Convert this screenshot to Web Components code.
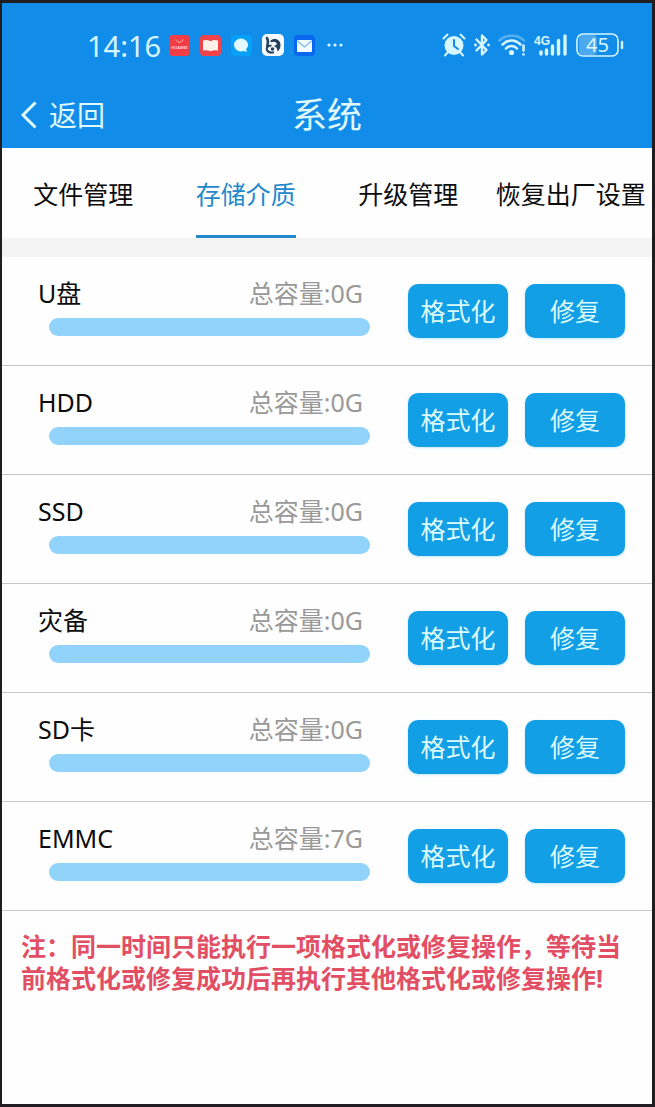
<!DOCTYPE html>
<html lang="zh-CN">
<head>
<meta charset="utf-8">
<meta name="viewport" content="width=device-width, initial-scale=1">
<title>系统</title>
<style>
  html { height: 100%; }
  body {
    margin: 0;
    min-height: 100%;
    box-sizing: border-box;
    display: flex;
    border: 3px solid #1f1d1f;
    border-left-width: 2px;
    background: #fefefe;
    color: #0c0c0c;
    font: 25px/32px "Noto Sans", "Noto Sans CJK SC", sans-serif;
  }
  storage-page { flex: 1; min-width: 0; }
</style>
</head>
<body>
<storage-page></storage-page>

<script>
const define = (name, html, setup) => {
  const template = document.createElement('template');
  template.innerHTML = html;
  customElements.define(name, class extends HTMLElement {
    constructor() {
      super();
      this.attachShadow({ mode: 'open' }).append(template.content.cloneNode(true));
    }
    connectedCallback() { if (setup) setup(this, this.shadowRoot); }
  });
};

define('status-bar', `
  <style>
    :host { display: flex; justify-content: space-between; align-items: center; height: 84px; padding: 0 28px 0 85px; color: #d8f6ff; }
    .group { display: flex; align-items: center; }
    .apps { gap: 10px; }
    .system { gap: 8px; }
    time { font-size: 29px; margin-right: -2px; padding-top: 2px; }
    svg { display: block; overflow: visible; }
    text { font-family: "Noto Sans", sans-serif; }
    .net { font-family: "Liberation Sans", sans-serif; }
  </style>
  <div class="group apps">
    <time>14:16</time>
    <svg width="21" height="21" viewBox="0 0 21 21"><rect width="21" height="21" rx="4" fill="#f23c46"/><path d="M7 4.500c.8 3.600 6.200 3.600 7 0" fill="none" stroke="#ffc3bd"/><text x="10.500" y="13.500" font-size="4" font-weight="700" fill="#ffd3cd" text-anchor="middle">HUAWEI</text></svg>
    <svg width="21" height="21" viewBox="0 0 21 21"><rect width="21" height="21" rx="4" fill="#ee4348"/><path d="M3 5.500q4-1.500 7.500.7Q14 4 18 5.500v10q-4-.8-7.500.7Q7 14.700 3 15.500z" fill="#fff1e9"/></svg>
    <svg width="21" height="21" viewBox="0 0 21 21"><rect width="21" height="21" rx="4" fill="#06a0f6"/><ellipse cx="10" cy="10" rx="7" ry="6.500" fill="#e3f9ff"/><path d="M10 15l6 2-1.500-4z" fill="#e3f9ff"/></svg>
    <svg width="22" height="22" viewBox="0 0 22 22"><rect width="22" height="22" rx="5" fill="#f5fbff"/><path d="M4 3.500C7.500 5 5.500 10 5.200 13" fill="none" stroke="#243e5b" stroke-width="2.600"/><path d="M8.500 6.500c5-3.500 10-.5 10 4.500 0 3-1 5-3 6.500 0-3-1.500-5-4-5.500 3-.5 4-2 2.500-3.500-1.300-1.200-3.500-1-5.500-.2z" fill="#243e5b"/><path d="M9.500 11.500c-4 0-5.500 2.500-4.500 4.500s4 3 7 2.300" fill="none" stroke="#243e5b" stroke-width="2"/><circle cx="10.500" cy="15" r="1.800" fill="#243e5b"/></svg>
    <svg width="21" height="21" viewBox="0 0 21 21"><rect width="21" height="21" rx="4" fill="#0867ee"/><rect x="3" y="5" width="15" height="12" rx="1" fill="#f1faff"/><path d="M3.500 6l7 6 7-6" fill="none" stroke="#7cb6ed" stroke-width="1.200"/></svg>
    <svg width="18" height="6" viewBox="0 0 18 6" fill="currentColor"><circle cx="4" cy="3" r="1.600"/><circle cx="10" cy="3" r="1.600"/><circle cx="16" cy="3" r="1.600"/></svg>
  </div>
  <div class="group system">
    <svg width="24" height="24" viewBox="0 0 24 24"><circle cx="12" cy="12.500" r="9.500" fill="currentColor"/><path d="M1.500 5.500l4-4M22.500 5.500l-4-4M5.500 19.500L3 22.500M18.500 19.500l2.500 3" stroke="currentColor" stroke-width="2" stroke-linecap="round"/><path d="M12 7v6l4 3" fill="none" stroke="#118be9" stroke-width="2" stroke-linecap="round"/></svg>
    <svg width="16" height="24" viewBox="0 0 16 24"><path d="M2.500 6.500l10 10.500L8 21.500v-19L12.500 7l-10 10.500" fill="none" stroke="currentColor" stroke-width="2.400" stroke-linejoin="round" stroke-linecap="round"/><circle cx="1.500" cy="12" r="1.400" fill="currentColor"/><circle cx="14.500" cy="12" r="1.400" fill="currentColor"/></svg>
    <svg width="28" height="24" viewBox="0 0 28 24" fill="none" stroke="currentColor" stroke-width="2.500" stroke-linecap="round"><path d="M1.500 7.500C8 1 20 1 26 7.500" opacity=".35"/><path d="M4.500 11.500C10 6 17 6 22.500 11.500M8 15.500c3.500-3.500 8-3.500 11 0"/><circle cx="13.500" cy="19.500" r="2.600" fill="currentColor" stroke="none"/><path d="M25.500 12.500v5M25.500 21.300v.1"/></svg>
    <svg width="34" height="24" viewBox="0 0 34 24"><text class="net" x="0" y="12" font-size="12" font-weight="700" fill="currentColor">4G</text><path d="M7 19v2M12.500 17v4M18.500 13v8M24.500 7.500V21M31 3v18" stroke="currentColor" stroke-width="3.400" stroke-linecap="round"/></svg>
    <svg width="48" height="26" viewBox="0 0 48 26"><rect x="3" y="3" width="18" height="20" rx="4" fill="#fff" opacity=".25"/><rect x="1" y="2" width="41" height="22" rx="6" fill="none" stroke="currentColor" stroke-width="1.600"/><path d="M46 10v6" stroke="currentColor" stroke-width="2.400" stroke-linecap="round"/><text x="21.500" y="20" font-size="20" fill="currentColor" text-anchor="middle">45</text></svg>
  </div>`);

define('title-bar', `
  <style>
    :host { display: grid; grid-template-columns: 1fr auto 1fr; align-items: center; height: 55px; padding: 0 18px 6px; color: #e0f9ff; }
    button { justify-self: start; display: flex; align-items: center; gap: 12px; padding: 0; border: 0; background: none; color: inherit; font: inherit; font-size: 28px; }
    h1 { margin: 0; font-size: 35px; line-height: 40px; font-weight: 400; }
    svg { display: block; }
  </style>
  <button type="button"><svg width="17" height="30" viewBox="0 0 17 30"><path d="M15.500 2.500L3 15l12.500 12.500" fill="none" stroke="currentColor" stroke-width="3"/></svg><span><slot name="back"></slot></span></button>
  <h1><slot></slot></h1>`);

define('tab-item', `
  <style>
    :host { display: flex; justify-content: center; white-space: nowrap; }
    button { padding: 30px 0 25px; border: 0; border-bottom: 3px solid transparent; background: none; color: inherit; font: inherit; white-space: nowrap; }
    :host([selected]) button { color: #2489cb; border-color: #2489cb; }
  </style>
  <button type="button" role="tab"><slot></slot></button>`,
  (host, root) => root.querySelector('button').setAttribute('aria-selected', host.hasAttribute('selected')));

define('tab-strip', `
  <style>
    :host { display: grid; grid-template-columns: repeat(4, minmax(0, 1fr)); border-bottom: 19px solid #f3f3f3; }
  </style>
  <slot></slot>`);

define('action-button', `
  <style>
    :host { display: block; width: 100px; }
    button { width: 100%; height: 54px; padding: 0; border: 0; border-radius: 10px; background: #129fe5; color: #dcfbff; font: inherit; box-shadow: 0 1px 3px #129fe540; }
  </style>
  <button type="button"><slot></slot></button>`);

define('storage-row', `
  <style>
    :host { display: flex; align-items: center; gap: 17px; height: 108px; padding: 0 27px 0 36px; border-bottom: 1px solid #c6c6c6; }
    .info { flex: 1; min-width: 0; margin-right: 21px; padding-bottom: 9px; }
    .line { display: flex; justify-content: space-between; padding-right: 7px; margin-bottom: 9px; }
    .size { color: #999; }
    progress { appearance: none; display: block; width: calc(100% - 11px); height: 18px; margin-left: 11px; border: 0; border-radius: 9px; overflow: hidden; background: #92d3fb; }
    progress::-webkit-progress-bar { background: #92d3fb; }
    progress::-webkit-progress-value { background: #129fe5; }
  </style>
  <div class="info">
    <div class="line"><label for="usage"><slot></slot></label><span class="size">总容量:<slot name="size"></slot></span></div>
    <progress id="usage" value="0" max="100"></progress>
  </div>
  <action-button>格式化</action-button>
  <action-button>修复</action-button>`);

define('notice-text', `
  <style>
    :host { display: block; padding: 19px; color: #e24f64; font-weight: 700; }
    p { margin: 0; }
  </style>
  <p><slot></slot></p>`);

define('storage-page', `
  <style>
    :host { display: block; }
    header { background: #118de9; }
  </style>
  <header>
    <status-bar></status-bar>
    <title-bar><span slot="back">返回</span>系统</title-bar>
  </header>
  <tab-strip role="tablist">
    <tab-item>文件管理</tab-item>
    <tab-item selected>存储介质</tab-item>
    <tab-item>升级管理</tab-item>
    <tab-item>恢复出厂设置</tab-item>
  </tab-strip>
  <main>
    <storage-row>U盘<span slot="size">0G</span></storage-row>
    <storage-row>HDD<span slot="size">0G</span></storage-row>
    <storage-row>SSD<span slot="size">0G</span></storage-row>
    <storage-row>灾备<span slot="size">0G</span></storage-row>
    <storage-row>SD卡<span slot="size">0G</span></storage-row>
    <storage-row>EMMC<span slot="size">7G</span></storage-row>
    <notice-text>注：同一时间只能执行一项格式化或修复操作，等待当前格式化或修复成功后再执行其他格式化或修复操作!</notice-text>
  </main>`);
</script>
</body>
</html>
